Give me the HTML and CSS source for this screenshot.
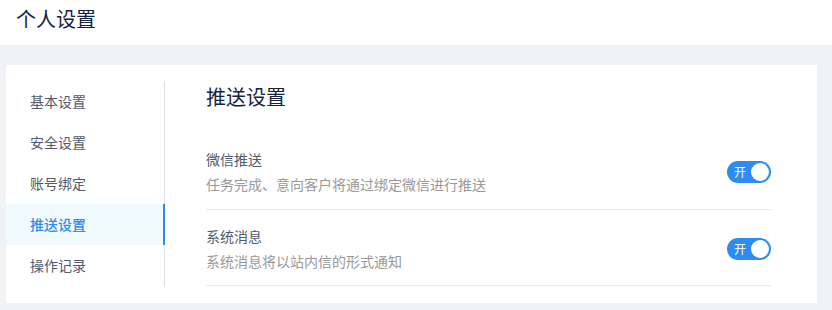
FILE: index.html
```html
<!DOCTYPE html>
<html lang="zh-CN">
<head>
    <meta charset="UTF-8">
    <title>个人设置</title>
    <link rel="stylesheet" href="styles.css">
</head>
<body>
<div class="page-hd">
    <h1>个人设置</h1>
</div>
<div class="card">
    <ul class="menu">
        <li class="menu-item">基本设置</li>
        <li class="menu-item">安全设置</li>
        <li class="menu-item">账号绑定</li>
        <li class="menu-item active">推送设置</li>
        <li class="menu-item">操作记录</li>
    </ul>
    <div class="main">
        <h2>推送设置</h2>
        <div class="row">
            <div class="row-text">
                <p class="row-title">微信推送</p>
                <p class="row-desc">任务完成、意向客户将通过绑定微信进行推送</p>
            </div>
            <span class="switch"><span class="switch-txt">开</span></span>
        </div>
        <div class="row">
            <div class="row-text">
                <p class="row-title">系统消息</p>
                <p class="row-desc">系统消息将以站内信的形式通知</p>
            </div>
            <span class="switch"><span class="switch-txt">开</span></span>
        </div>
    </div>
</div>
</body>
</html>
```

FILE: styles.css
```css
/* reset */
body{margin:0;background:#f0f2f5;font-family:"Noto Sans CJK SC","Liberation Sans",sans-serif;color:#515a6e;}
h1,h2,p,ul{margin:0;padding:0;}
ul{list-style:none;}

/* 顶部标题 */
.page-hd{height:45px;background:#fff;padding-left:16px;box-sizing:border-box;}
.page-hd h1{font-size:20px;font-weight:normal;line-height:38px;color:#17233d;}

/* 卡片 */
.card{display:flex;background:#fff;margin:20px 15px 0 6px;padding:16px 0 16px 0;height:238px;box-sizing:border-box;}

/* 左侧菜单 */
.menu{width:158px;border-right:1px solid #dcdee2;flex:none;}
.menu-item{position:relative;height:41px;line-height:41px;padding-left:24px;font-size:14px;color:#515a6e;}
.menu-item.active{background:#f0faff;color:#2d8cf0;font-weight:500;}
.menu-item.active:after{content:"";position:absolute;top:0;bottom:0;right:-1px;width:2px;background:#2d8cf0;}

/* 右侧内容 */
.main{flex:1;padding:0 46px 0 41px;}
.main h2{font-size:20px;font-weight:normal;line-height:32px;color:#17233d;margin-bottom:19px;}
.row{display:flex;align-items:center;justify-content:space-between;padding:16px 0 14px;border-bottom:1px solid #e8eaec;}
.row + .row{padding:15px 0 13px;}
.row-title{font-size:14px;line-height:22px;color:#515a6e;}
.row-desc{font-size:14px;line-height:22px;margin-top:3px;color:#999;}

/* 开关 */
.switch{position:relative;display:inline-block;width:44px;height:22px;border-radius:11px;background:#2d8cf0;}
.switch:after{content:"";position:absolute;right:2px;top:2px;width:18px;height:18px;border-radius:50%;background:#fff;}
.switch-txt{position:absolute;left:7px;top:0;font-size:12px;line-height:22px;color:#fff;}
```
